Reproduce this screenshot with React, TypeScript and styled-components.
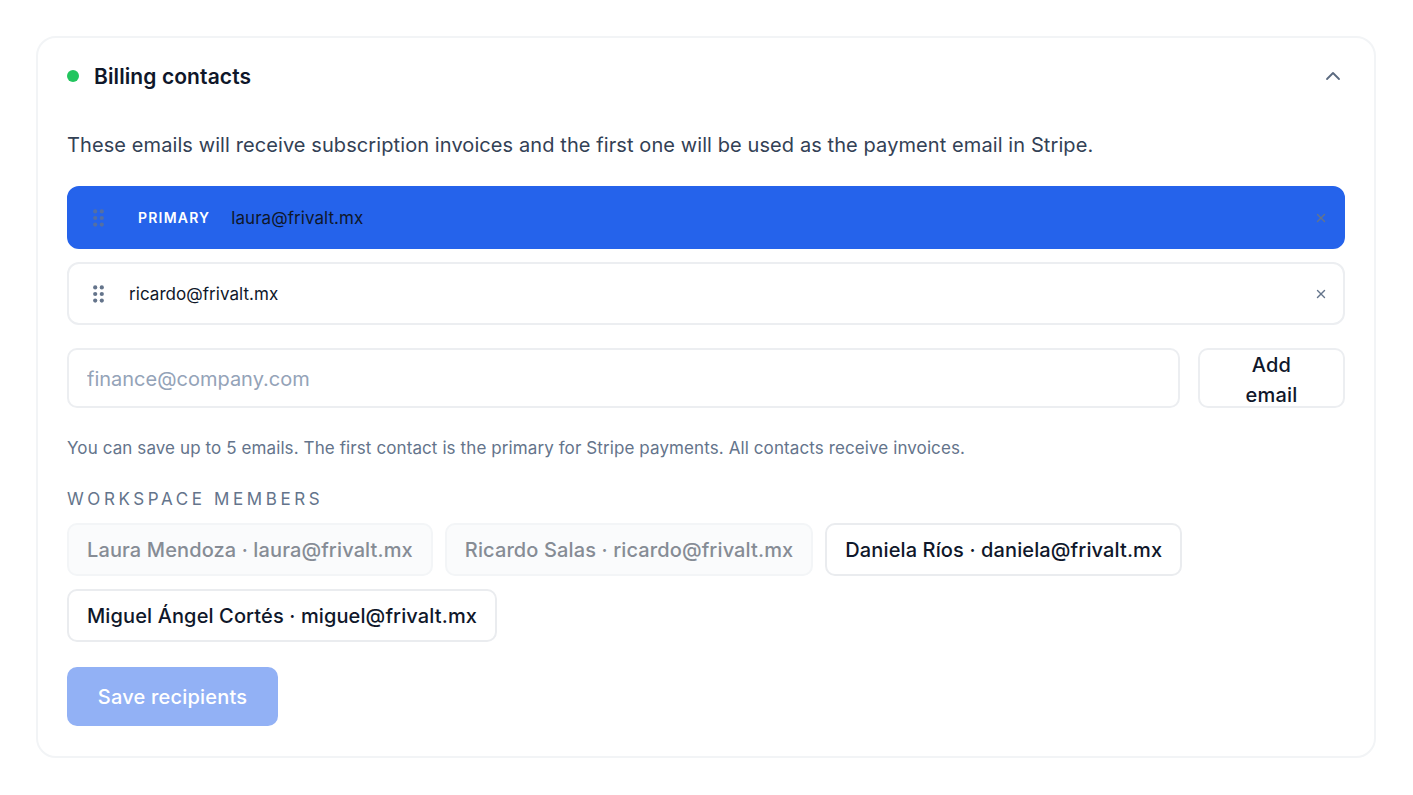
import React from 'react';
import styled, { createGlobalStyle } from 'styled-components';
import { ChevronUp, X } from 'lucide-react';

const GlobalStyle = createGlobalStyle`
  html, body {
    margin: 0;
    padding: 0;
    background: #ffffff;
    font-family: 'Inter', 'Liberation Sans', sans-serif;
  }
  * { box-sizing: border-box; }
`;

const Page = styled.div`
  padding: 36px 37px 37px 36px;
`;

const Card = styled.section`
  border: 2px solid #f2f4f6;
  border-radius: 20px;
  padding: 0 29px 30px 29px;
  background: #fff;
`;

const Header = styled.header`
  display: flex;
  align-items: center;
  justify-content: space-between;
  height: 76px;
`;

const TitleGroup = styled.div`
  display: flex;
  align-items: center;
  gap: 15px;
`;

const StatusDot = styled.span`
  width: 12px;
  height: 12px;
  border-radius: 50%;
  background: #22c55e;
`;

const Title = styled.h2`
  margin: 0;
  font-size: 21px;
  font-weight: 600;
  letter-spacing: 0.1px;
  color: #0f172a;
`;

const Collapse = styled.button`
  display: flex;
  border: 0;
  padding: 0;
  background: none;
  color: #5b6a80;
`;

const Description = styled.p`
  margin: 16px 0 0;
  font-size: 20px;
  line-height: 30px;
  letter-spacing: 0.09px;
  color: #334155;
`;

const Rows = styled.div`
  display: flex;
  flex-direction: column;
  gap: 13px;
  margin-top: 26px;
`;

const Row = styled.div<{ $primary?: boolean }>`
  display: flex;
  align-items: center;
  height: 63px;
  padding: 0 15.5px 0 24px;
  border-radius: 12px;
  border: 2px solid ${p => (p.$primary ? '#2563eb' : '#eceef1')};
  background: ${p => (p.$primary ? '#2563eb' : '#fff')};
`;

const Grip = styled.svg<{ $faded?: boolean }>`
  flex: none;
  color: #64748b;
  opacity: ${p => (p.$faded ? 0.75 : 1)};
`;

const PrimaryTag = styled.span`
  margin-left: 34px;
  font-size: 14px;
  font-weight: 600;
  letter-spacing: 1.2px;
  color: #fff;
`;

const Email = styled.span<{ $primary?: boolean }>`
  margin-left: ${p => (p.$primary ? '21px' : '25px')};
  font-size: 17px;
  letter-spacing: 0.05px;
  color: #0f172a;
`;

const Remove = styled.button`
  display: flex;
  margin-left: auto;
  border: 0;
  padding: 0;
  background: none;
  color: #64748b;
`;

const AddRow = styled.div`
  display: flex;
  gap: 18px;
  margin-top: 23px;
`;

const EmailInput = styled.input`
  flex: 1;
  min-width: 0;
  height: 60px;
  padding: 2px 18px 0;
  border: 2px solid #eceef1;
  border-radius: 10px;
  font-family: inherit;
  font-size: 20px;
  color: #0f172a;
  outline: none;
  &::placeholder { color: #94a3b8; opacity: 1; }
`;

const AddButton = styled.button`
  flex: none;
  width: 147px;
  height: 60px;
  padding: 0 30px 2px;
  border: 2px solid #eceef1;
  border-radius: 10px;
  background: #fff;
  font-family: inherit;
  font-size: 20px;
  font-weight: 500;
  letter-spacing: 0.2px;
  line-height: 30px;
  color: #0f172a;
`;

const Hint = styled.p`
  margin: 27px 0 0;
  font-size: 17px;
  line-height: 26px;
  letter-spacing: 0.1px;
  color: #64748b;
`;

const SectionLabel = styled.div`
  margin-top: 26px;
  font-size: 17px;
  line-height: 24px;
  letter-spacing: 3.6px;
  color: #64748b;
`;

const Chips = styled.div`
  display: flex;
  flex-wrap: wrap;
  gap: 13px 12px;
  margin-top: 12px;
`;

const Chip = styled.button<{ $used?: boolean }>`
  height: 53px;
  padding: 0 18px;
  border: 2px solid ${p => (p.$used ? '#f3f5f7' : '#eaecef')};
  border-radius: 10px;
  background: ${p => (p.$used ? '#fafbfc' : '#fff')};
  font-family: inherit;
  font-size: 20px;
  font-weight: 500;
  letter-spacing: 0.12px;
  color: ${p => (p.$used ? '#868c95' : '#0f172a')};
`;

const SaveButton = styled.button`
  display: block;
  width: 211px;
  height: 59px;
  margin-top: 25px;
  border: 0;
  border-radius: 10px;
  background: #92b1f5;
  font-family: inherit;
  font-size: 20px;
  font-weight: 500;
  letter-spacing: 0.2px;
  color: #fff;
`;

const GripIcon: React.FC<{ faded?: boolean }> = ({ faded }) => (
  <Grip $faded={faded} width="11" height="18" viewBox="0 0 11 18">
    {[2.4, 9, 15.6].map(cy =>
      [2.2, 8.8].map(cx => <circle key={`${cx}-${cy}`} cx={cx} cy={cy} r="2.1" fill="currentColor" />)
    )}
  </Grip>
);

const members = [
  { label: 'Laura Mendoza · laura@frivalt.mx', used: true },
  { label: 'Ricardo Salas · ricardo@frivalt.mx', used: true },
  { label: 'Daniela Ríos · daniela@frivalt.mx', used: false },
  { label: 'Miguel Ángel Cortés · miguel@frivalt.mx', used: false },
];

const App: React.FC = () => (
  <Page>
    <GlobalStyle />
    <Card>
      <Header>
        <TitleGroup>
          <StatusDot />
          <Title>Billing contacts</Title>
        </TitleGroup>
        <Collapse aria-label="Collapse">
          <ChevronUp size={24} strokeWidth={1.8} />
        </Collapse>
      </Header>

      <Description>
        These emails will receive subscription invoices and the first one will be used as the payment email in Stripe.
      </Description>

      <Rows>
        <Row $primary>
          <GripIcon faded />
          <PrimaryTag>PRIMARY</PrimaryTag>
          <Email $primary>laura@frivalt.mx</Email>
          <Remove aria-label="Remove laura@frivalt.mx">
            <X size={14} strokeWidth={2.4} />
          </Remove>
        </Row>
        <Row>
          <GripIcon />
          <Email>ricardo@frivalt.mx</Email>
          <Remove aria-label="Remove ricardo@frivalt.mx">
            <X size={14} strokeWidth={2.4} />
          </Remove>
        </Row>
      </Rows>

      <AddRow>
        <EmailInput placeholder="finance@company.com" />
        <AddButton>Add email</AddButton>
      </AddRow>

      <Hint>You can save up to 5 emails. The first contact is the primary for Stripe payments. All contacts receive invoices.</Hint>

      <SectionLabel>WORKSPACE MEMBERS</SectionLabel>
      <Chips>
        {members.map(m => (
          <Chip key={m.label} $used={m.used}>{m.label}</Chip>
        ))}
      </Chips>

      <SaveButton>Save recipients</SaveButton>
    </Card>
  </Page>
);

export default App;
